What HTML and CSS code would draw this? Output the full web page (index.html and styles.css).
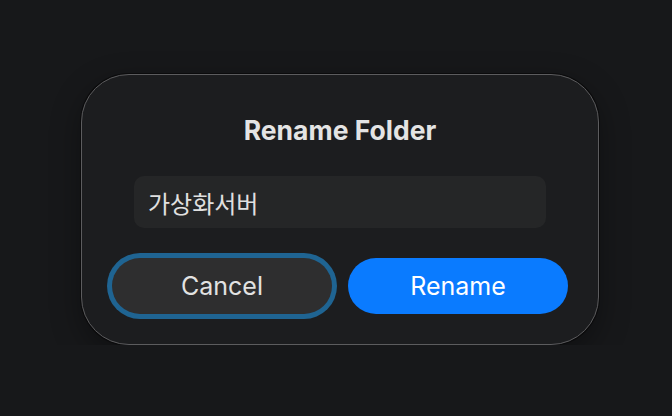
FILE: index.html
```html
<!DOCTYPE html>
<html lang="ko">
<head>
    <meta charset="UTF-8">
    <meta name="viewport" content="width=device-width, initial-scale=1.0">
    <title>Rename Folder</title>
    <link rel="stylesheet" href="styles.css">
</head>
<body>
    <div class="stage">
        <div class="dialog">
            <h1 class="dialog-title">Rename Folder</h1>
            <div class="name-field">가상화서버</div>
            <div class="actions">
                <button class="btn btn-cancel">Cancel</button>
                <button class="btn btn-primary">Rename</button>
            </div>
        </div>
    </div>
</body>
</html>
```

FILE: styles.css
```css
body {
    margin: 0;
    padding: 0;
    background-color: #17181a;
    font-family: Inter, "Noto Sans", "Noto Sans CJK KR", sans-serif;
    color: #e2e2e2;
}

.stage {
    padding: 74px 0 0 81px;
}

.dialog {
    width: 456px;
    padding: 39px 30px 30px;
    background-color: #1c1d1f;
    border: 1px solid #5c5c5e;
    border-radius: 48px;
    box-shadow: 0 0 0 1px #0b0b0c, 0 10px 30px rgba(0, 0, 0, 0.35);
}

.dialog-title {
    margin: 0;
    font-size: 26.5px;
    line-height: 32px;
    font-weight: 700;
    text-align: center;
    color: #e4e4e4;
}

.name-field {
    margin: 30px 22px 0;
    height: 52px;
    padding: 0 14px;
    box-sizing: border-box;
    background-color: #252627;
    border-radius: 10px;
    display: flex;
    align-items: center;
    font-family: "Noto Sans CJK KR", sans-serif;
    font-size: 24px;
    color: #e0e0e0;
}

.actions {
    margin-top: 30px;
    display: flex;
    gap: 16px;
}

.btn {
    flex: 1;
    height: 56px;
    border: none;
    border-radius: 28px;
    font-family: Inter, "Noto Sans", sans-serif;
    font-size: 25px;
    cursor: pointer;
}

.btn-cancel {
    background-color: #2e2e2f;
    color: #e2e2e2;
    box-shadow: 0 0 0 5px #1f6492;
}

.btn-primary {
    background-color: #0a7bff;
    color: #ffffff;
}
```
